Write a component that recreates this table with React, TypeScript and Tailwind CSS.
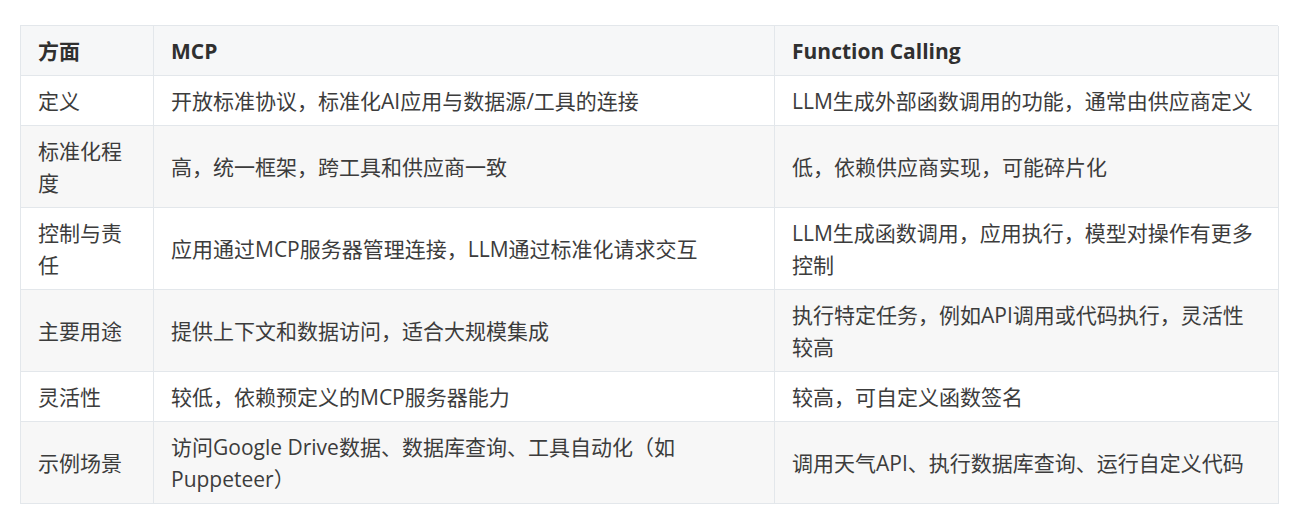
import React from "react";

const rows: { a: string; b: string; c: string }[] = [
  { a: "定义", b: "开放标准协议，标准化AI应用与数据源/工具的连接", c: "LLM生成外部函数调用的功能，通常由供应商定义" },
  { a: "标准化程度", b: "高，统一框架，跨工具和供应商一致", c: "低，依赖供应商实现，可能碎片化" },
  { a: "控制与责任", b: "应用通过MCP服务器管理连接，LLM通过标准化请求交互", c: "LLM生成函数调用，应用执行，模型对操作有更多控制" },
  { a: "主要用途", b: "提供上下文和数据访问，适合大规模集成", c: "执行特定任务，例如API调用或代码执行，灵活性较高" },
  { a: "灵活性", b: "较低，依赖预定义的MCP服务器能力", c: "较高，可自定义函数签名" },
  { a: "示例场景", b: "访问Google Drive数据、数据库查询、工具自动化（如Puppeteer）", c: "调用天气API、执行数据库查询、运行自定义代码" },
];

const font = {
  fontFamily: '"Open Sans", "Noto Sans CJK SC", sans-serif',
};

export default function App() {
  return (
    <div className="w-[1300px] h-[516px] bg-white overflow-hidden" style={font}>
      <div className="ml-[20px] mt-[25px] w-[1258px] grid grid-cols-[133px_621px_504px] border-l border-t border-[#e3e7eb] text-[21px] leading-[32px]">
        <div className="flex items-center px-[17px] py-[8.5px] border-r border-b border-[#e3e7eb] bg-[#f6f7f8] font-bold text-[#303030]">方面</div>
        <div className="flex items-center px-[17px] py-[8.5px] border-r border-b border-[#e3e7eb] bg-[#f6f7f8] font-bold text-[#303030]">MCP</div>
        <div className="flex items-center px-[17px] py-[8.5px] border-r border-b border-[#e3e7eb] bg-[#f6f7f8] font-bold text-[#303030]">Function Calling</div>
        {rows.map((r, i) => {
          const bg = i % 2 === 1 ? "bg-[#f7f7f7]" : "bg-white";
          return (
            <React.Fragment key={i}>
              <div className={`flex items-center px-[17px] py-[8.5px] border-r border-b border-[#e3e7eb] text-[#3c3c3c] ${bg}`}>{r.a}</div>
              <div className={`flex items-center px-[17px] py-[8.5px] border-r border-b border-[#e3e7eb] text-[#3c3c3c] ${bg}`}>{r.b}</div>
              <div className={`flex items-center px-[17px] py-[8.5px] border-r border-b border-[#e3e7eb] text-[#3c3c3c] ${bg}`}>{r.c}</div>
            </React.Fragment>
          );
        })}
      </div>
    </div>
  );
}
